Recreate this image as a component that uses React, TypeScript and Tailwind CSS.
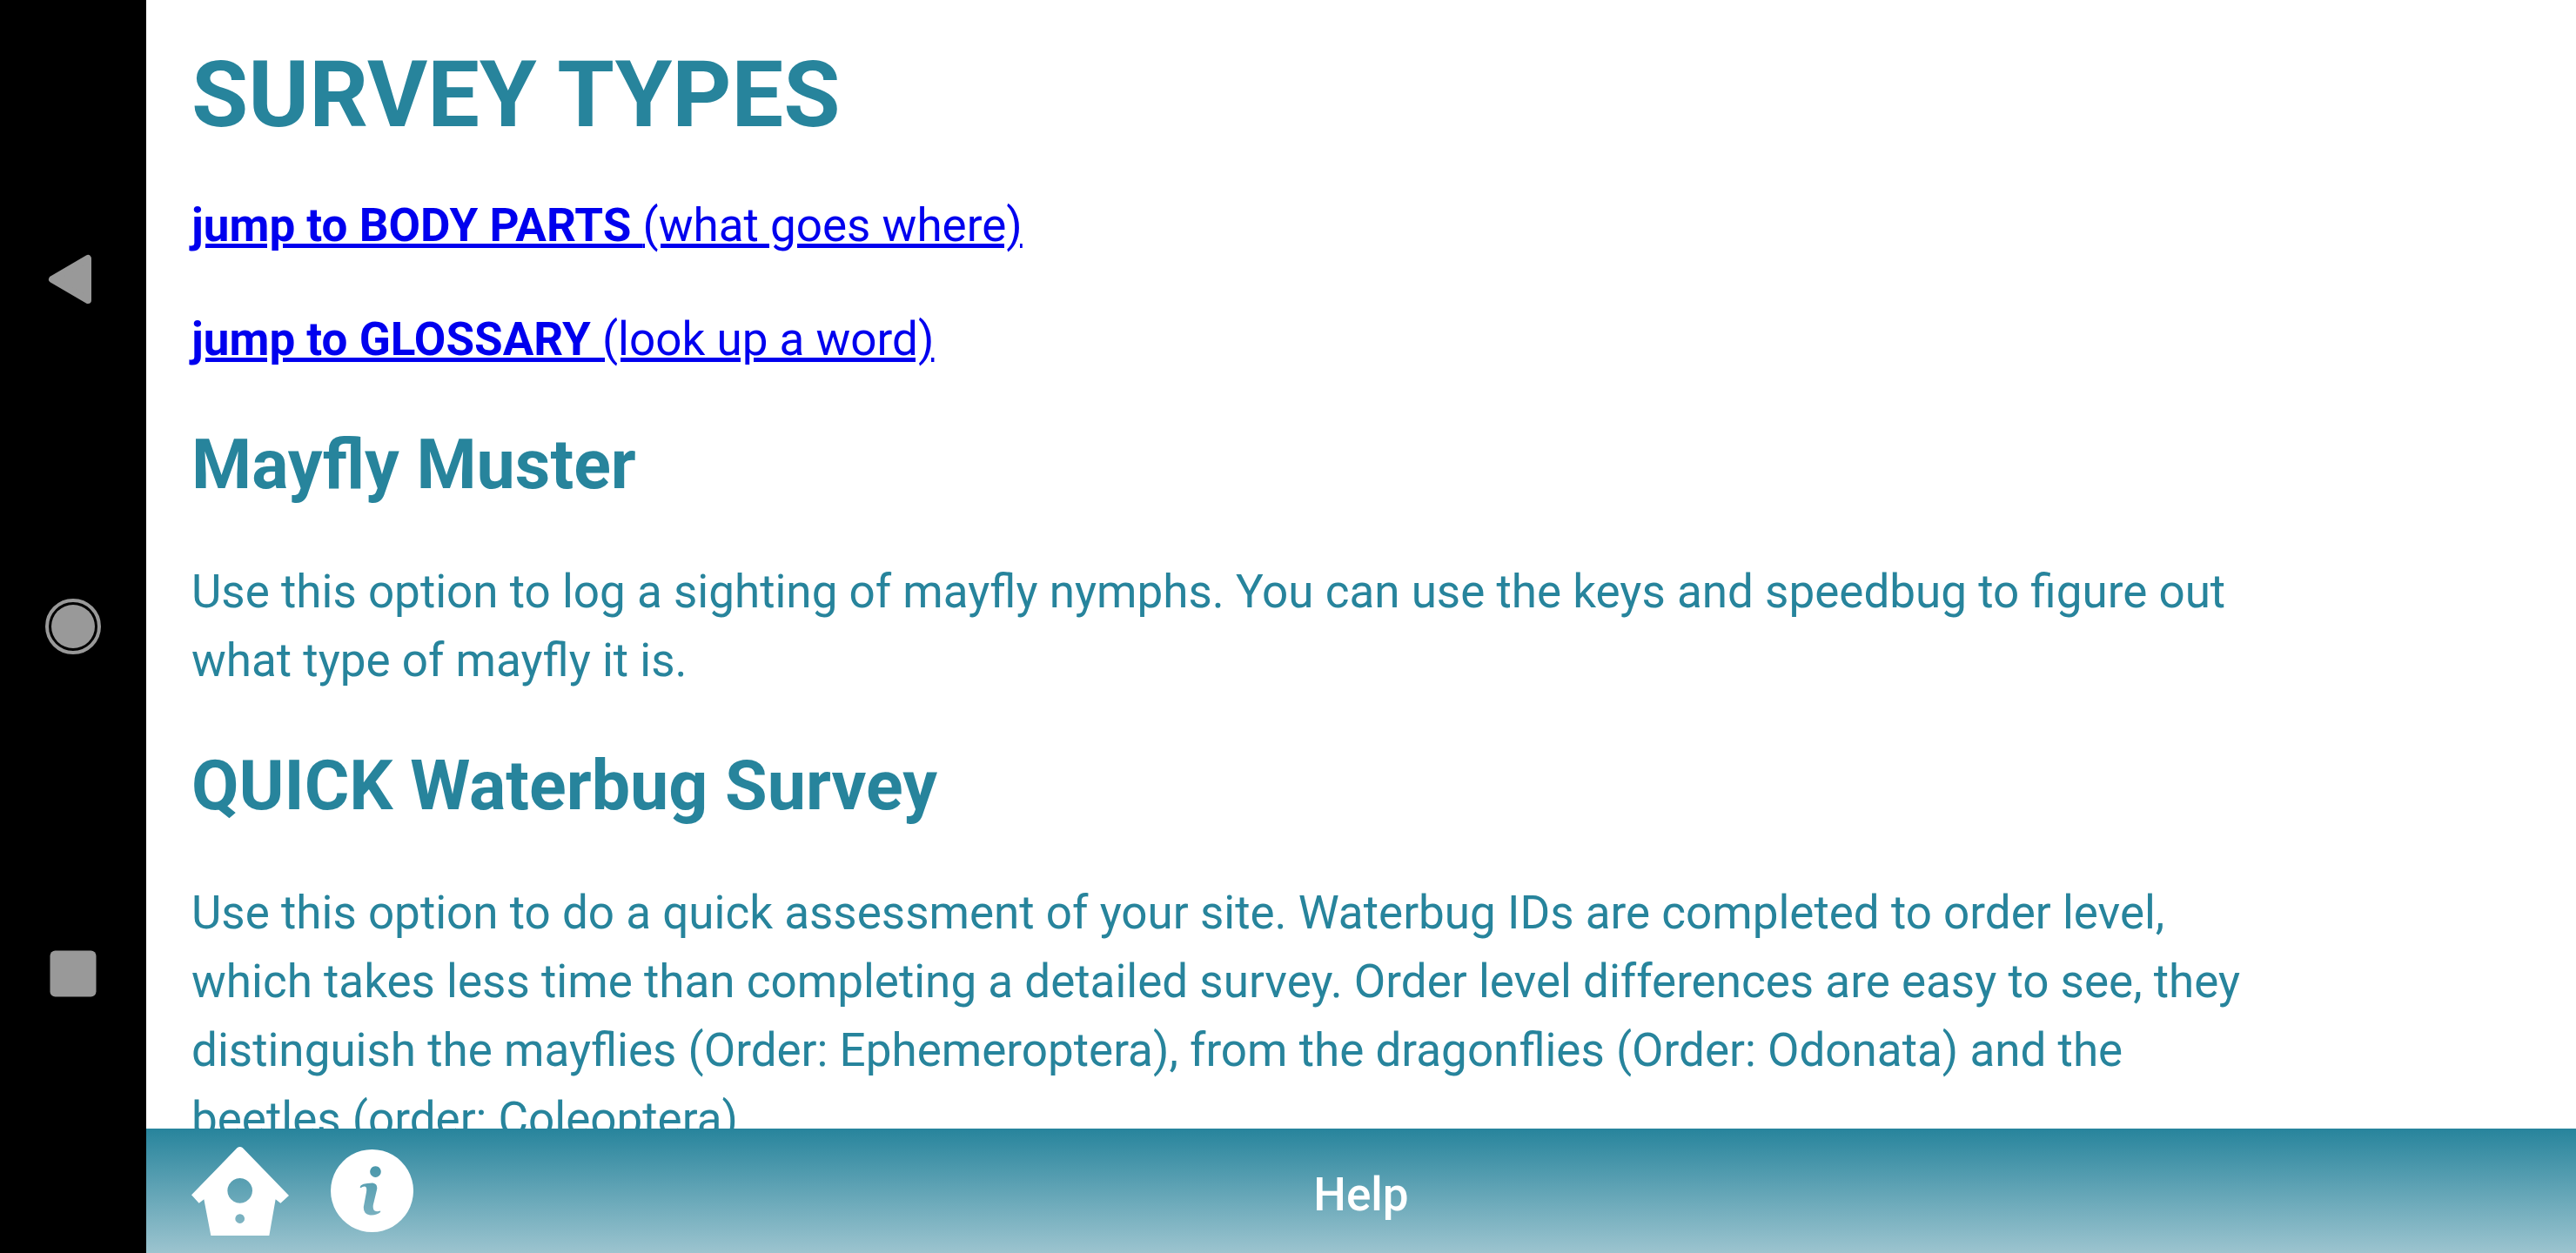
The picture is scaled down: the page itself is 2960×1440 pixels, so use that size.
import type { ReactNode } from "react";

function NavButton({ label, children }: { label: string; children: ReactNode }) {
  return (
    <button type="button" aria-label={label} className="flex w-full flex-1 items-center justify-center">
      {children}
    </button>
  );
}

function SystemNav() {
  return (
    <nav aria-label="System navigation" className="flex w-[168px] shrink-0 flex-col bg-black py-[122px] text-[#999999]">
      <NavButton label="Back">
        <svg viewBox="0 0 64 64" className="size-16" fill="currentColor">
          <path d="M8 32 L49 8 V56 Z" stroke="currentColor" strokeWidth="8" strokeLinejoin="round" />
        </svg>
      </NavButton>
      <NavButton label="Home">
        <svg viewBox="0 0 64 64" className="size-16" fill="currentColor">
          <circle cx="32" cy="32" r="30" fill="none" stroke="currentColor" strokeWidth="4" />
          <circle cx="32" cy="32" r="25" />
        </svg>
      </NavButton>
      <NavButton label="Recent apps">
        <svg viewBox="0 0 64 64" className="size-16" fill="currentColor">
          <rect x="5.5" y="5.5" width="53" height="53" rx="6" />
        </svg>
      </NavButton>
    </nav>
  );
}

function BirdhouseIcon() {
  return (
    <svg viewBox="0 0 336 306" className="h-[102px] w-[112px]" fill="currentColor">
      <path
        fillRule="evenodd"
        d="M158 3 Q167 -3 176 3 L336 168 L307 194 L290 181 L268 306 H67 L43 181 L26 194 L0 166 Z M167 108 a43 43 0 1 0 0.1 0 Z M167 232 a16 16 0 1 0 0.1 0 Z"
      />
    </svg>
  );
}

function InfoIcon() {
  return (
    <svg viewBox="0 0 286 286" className="size-[95px]" fill="currentColor">
      <path
        fillRule="evenodd"
        d="M143 0 a143 143 0 1 0 0.1 0 Z M155 58 a19 19 0 1 1 -0.1 0 Z M101 130 Q104 117 145 116 Q163 119 160 138 L147 192 Q143 221 172 212 V217 Q158 229 136 227 Q112 224 114 198 L123 150 Q127 128 117 128 Q109 128 104 133 Z"
      />
    </svg>
  );
}

export default function App() {
  return (
    <div className="flex h-screen overflow-hidden bg-white font-[Roboto,sans-serif]">
      <SystemNav />
      <div className="flex min-w-0 flex-1 flex-col">
        <main className="flow-root min-h-0 flex-1 overflow-hidden text-[53px] leading-[79px] text-[#27849c]">
          <div className="ml-[52px] w-[85%]">
            <h1 className="mt-[70px] mb-[71px] text-[106px] leading-[79px] font-bold">SURVEY TYPES</h1>
            <p className="my-[52px]">
              <a href="#body-parts" className="text-[#0000ee] underline">
                <b>jump to BODY PARTS </b>(what goes where)
              </a>
            </p>
            <p className="my-[52px]">
              <a href="#glossary" className="text-[#0000ee] underline">
                <b>jump to GLOSSARY </b>(look up a word)
              </a>
            </p>
            <h2 className="mt-[65px] mb-[67px] text-[79px] leading-[79px] font-bold">Mayfly Muster</h2>
            <p className="my-[52px]">
              Use this option to log a sighting of mayfly nymphs. You can use the keys and speedbug to figure out what
              type of mayfly it is.
            </p>
            <h2 className="mt-[65px] mb-[67px] text-[79px] leading-[79px] font-bold">QUICK Waterbug Survey</h2>
            <p className="my-[52px]">
              Use this option to do a quick assessment of your site. Waterbug IDs are completed to order level, which
              takes less time than completing a detailed survey. Order level differences are easy to see, they
              distinguish the mayflies (Order: Ephemeroptera), from the dragonflies (Order: Odonata) and the beetles
              (order: Coleoptera).
            </p>
          </div>
        </main>
        <footer className="grid h-[143px] shrink-0 grid-cols-[1fr_auto_1fr] items-center bg-linear-to-b/srgb from-[#27849c] to-[#9cc4cf] px-[52px] text-white">
          <div className="flex items-center gap-12">
            <button type="button" aria-label="Home">
              <BirdhouseIcon />
            </button>
            <button type="button" aria-label="Information">
              <InfoIcon />
            </button>
          </div>
          <span className="pt-2 text-[53px] leading-[64px] font-medium">Help</span>
        </footer>
      </div>
    </div>
  );
}
